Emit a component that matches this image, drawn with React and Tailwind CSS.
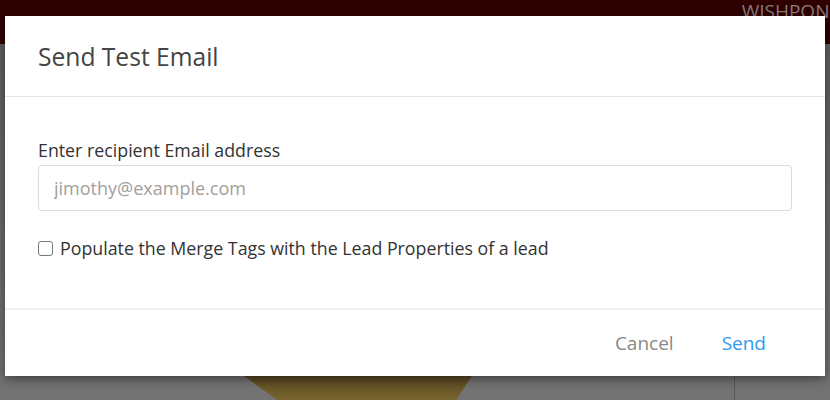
export default function App() {
  return (
    <div
      className="relative w-[830px] h-[400px] overflow-hidden bg-[#6d6d6d]"
      style={{ fontFamily: '"Open Sans", "Liberation Sans", sans-serif' }}
    >
      {/* dimmed app behind the modal */}
      <div className="h-[44px] bg-[#2e0000] flex justify-end items-start">
        <span className="text-[19px] leading-[22px] text-[#8a7a7a] -mr-[10px]">WISHPONE</span>
      </div>
      <div className="h-[356px] bg-gradient-to-b from-[#5f5f5f] to-[#737373]" />
      <svg className="absolute left-[244px] top-[376px]" width="228" height="24" viewBox="0 0 228 24">
        <defs>
          <linearGradient id="ylw" x1="0" y1="0" x2="0" y2="1">
            <stop offset="0" stopColor="#564620" />
            <stop offset="1" stopColor="#7a6630" />
          </linearGradient>
        </defs>
        <polygon points="0,0 228,0 212,24 33,24" fill="url(#ylw)" />
      </svg>
      <div className="absolute left-[734px] top-[376px] w-px h-[24px] bg-[#5a5a5a]" />

      {/* modal */}
      <div className="absolute left-[5px] top-[16px] w-[820px] h-[360px] bg-white shadow-[0_3px_10px_rgba(0,0,0,0.45)] flex flex-col">
        <div className="h-[81px] px-[33px] flex items-center border-b border-[#e5e5e5]">
          <h2 className="text-[24.6px] leading-[30px] text-[#444] pt-[1px]">Send Test Email</h2>
        </div>
        <div className="h-[211px] px-[33px] pt-[41px] flex flex-col">
          <label className="text-[17.8px] leading-[24px] text-[#333]">Enter recipient Email address</label>
          <input
            type="text"
            placeholder="jimothy@example.com"
            className="mt-[3px] h-[46px] w-full rounded-[4px] border border-[#dcdcdc] px-[15px] text-[18px] text-[#333] placeholder:text-[#a0a0a0] outline-none"
          />
          <label className="mt-[25px] flex items-center gap-[7px] text-[17.8px] leading-[24px] text-[#333]">
            <span className="w-[15px] h-[15px] rounded-[3px] border border-[#777] bg-white" />
            Populate the Merge Tags with the Lead Properties of a lead
          </label>
        </div>
        <div className="flex-1 border-t-2 border-[#f0f0f0] flex items-center justify-end pr-[59px] gap-[48px]">
          <button className="text-[19px] text-[#888]">Cancel</button>
          <button className="text-[19px] text-[#2e9af2]">Send</button>
        </div>
      </div>
    </div>
  );
}
